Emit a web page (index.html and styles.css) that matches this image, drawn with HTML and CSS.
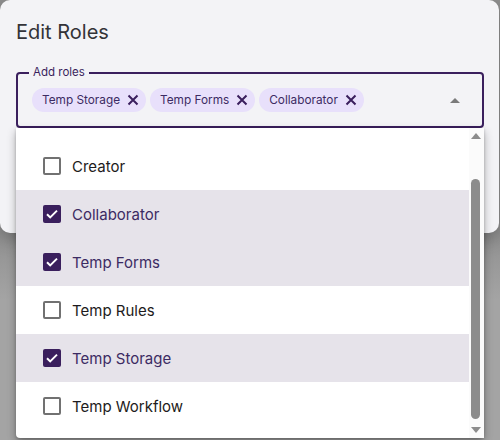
FILE: index.html
```html
<!DOCTYPE html>
<html lang="en">
<head>
    <meta charset="UTF-8">
    <meta name="viewport" content="width=device-width, initial-scale=1.0">
    <title>Edit Roles</title>
    <link rel="stylesheet" href="styles.css">
</head>
<body>
    <div class="dialog">
        <h2 class="dialog-title">Edit Roles</h2>

        <div class="field">
            <span class="field-label">Add roles</span>
            <div class="chips">
                <span class="chip">Temp Storage
                    <svg class="chip-x" viewBox="0 0 12 12"><path d="M1.5 1.5l9 9M10.5 1.5l-9 9"/></svg>
                </span>
                <span class="chip">Temp Forms
                    <svg class="chip-x" viewBox="0 0 12 12"><path d="M1.5 1.5l9 9M10.5 1.5l-9 9"/></svg>
                </span>
                <span class="chip">Collaborator
                    <svg class="chip-x" viewBox="0 0 12 12"><path d="M1.5 1.5l9 9M10.5 1.5l-9 9"/></svg>
                </span>
            </div>
            <span class="caret"></span>
        </div>
    </div>

    <!-- dropdown list, open below the field -->
    <div class="listbox">
        <ul class="options">
            <li class="option">
                <span class="box"></span>Creator
            </li>
            <li class="option selected">
                <span class="box"><svg viewBox="0 0 18 18"><path d="M4 9.2l3.2 3.2L14 5.6"/></svg></span>Collaborator
            </li>
            <li class="option selected">
                <span class="box"><svg viewBox="0 0 18 18"><path d="M4 9.2l3.2 3.2L14 5.6"/></svg></span>Temp Forms
            </li>
            <li class="option">
                <span class="box"></span>Temp Rules
            </li>
            <li class="option selected">
                <span class="box"><svg viewBox="0 0 18 18"><path d="M4 9.2l3.2 3.2L14 5.6"/></svg></span>Temp Storage
            </li>
            <li class="option">
                <span class="box"></span>Temp Workflow
            </li>
        </ul>
        <div class="scrollbar">
            <span class="arrow up"></span>
            <div class="track"><div class="thumb"></div></div>
            <span class="arrow down"></span>
        </div>
    </div>
</body>
</html>
```

FILE: styles.css
```css
body {
    margin: 0;
    width: 500px;
    height: 440px;
    overflow: hidden;
    position: relative;
    font-family: Inter, "Noto Sans", sans-serif;
    background: linear-gradient(180deg, #8f8f8f 230px, #a4a4a4 300px);
}

.dialog {
    width: 499px;
    height: 233px;
    box-sizing: border-box;
    padding: 20px 16px 0;
    background: #f3f3f6;
    border-radius: 10px;
    box-shadow: 0 6px 18px rgba(0, 0, 0, 0.25);
}

.dialog-title {
    margin: 0 0 28px;
    font-size: 20px;
    line-height: 24px;
    font-weight: 400;
    color: #333338;
}

.field {
    position: relative;
    width: 468px;
    height: 56px;
    box-sizing: border-box;
    border: 2px solid #3a1f5d;
    border-radius: 4px;
    display: flex;
    align-items: center;
    padding: 0 14px;
}

.field-label {
    position: absolute;
    top: -9px;
    left: 11px;
    padding: 0 4px;
    font-size: 11.5px;
    line-height: 14px;
    color: #3a1f5d;
    background: #f3f3f6;
}

.chips {
    display: flex;
    gap: 4px;
    flex: 1;
}

.chip {
    display: flex;
    align-items: center;
    gap: 7px;
    height: 24px;
    padding: 0 7px 0 10px;
    border-radius: 12px;
    background: #e8e0fb;
    color: #3c2b63;
    font-size: 11.8px;
}

.chip-x {
    width: 12px;
    height: 12px;
    fill: none;
    stroke: #3a1f5d;
    stroke-width: 2;
}

.caret {
    width: 0;
    height: 0;
    margin-right: 8px;
    border-left: 5px solid transparent;
    border-right: 5px solid transparent;
    border-bottom: 5px solid #7a7a7a;
}

.listbox {
    position: absolute;
    top: 128px;
    left: 16px;
    width: 468px;
    height: 310px;
    display: flex;
    background: #fff;
    border-radius: 0 0 4px 4px;
    box-shadow: 0 4px 10px rgba(0, 0, 0, 0.3), 0 1px 3px rgba(0, 0, 0, 0.2);
}

.options {
    flex: 1;
    margin: 0;
    padding: 14px 0 0;
    list-style: none;
}

.option {
    display: flex;
    align-items: center;
    gap: 11px;
    height: 48px;
    padding-left: 27px;
    font-size: 15px;
    color: #1d1b20;
}

.option.selected {
    background: #e6e3ea;
    color: #3c2b63;
}

.box {
    width: 18px;
    height: 18px;
    box-sizing: border-box;
    border: 2px solid #717171;
    border-radius: 2px;
}

.selected .box {
    border: none;
    background: #3a1f5d;
}

.box svg {
    display: block;
    width: 18px;
    height: 18px;
    fill: none;
    stroke: #fff;
    stroke-width: 2;
}

.scrollbar {
    width: 15px;
    display: flex;
    flex-direction: column;
    align-items: center;
    padding: 5px 0;
    box-sizing: border-box;
    background: #fbfbfb;
}

.arrow {
    width: 0;
    height: 0;
    margin-right: 2px;
    border-left: 5px solid transparent;
    border-right: 5px solid transparent;
}

.arrow.up {
    border-bottom: 6px solid #8c8c8c;
}

.arrow.down {
    border-top: 6px solid #8c8c8c;
}

.track {
    flex: 1;
    width: 100%;
    padding: 40px 0 8px;
    box-sizing: border-box;
    display: flex;
    justify-content: center;
}

.thumb {
    width: 9px;
    margin-right: 2px;
    border-radius: 5px;
    background: #8c8c8c;
}
```
